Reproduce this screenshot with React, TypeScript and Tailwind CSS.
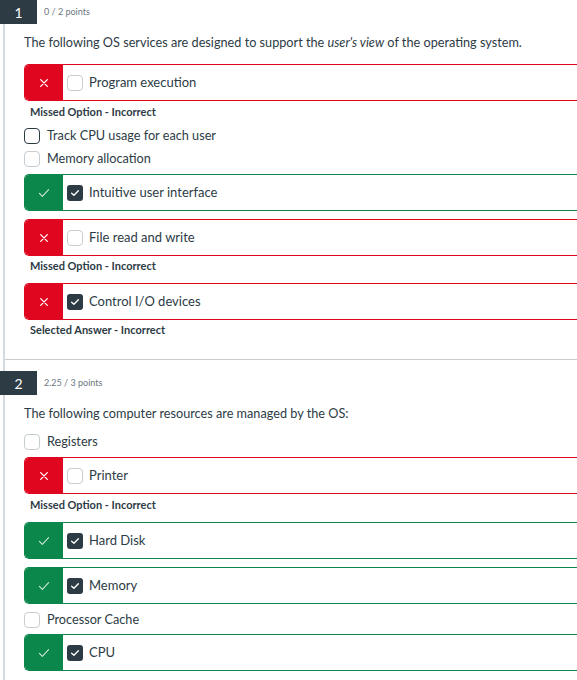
import type { ReactNode } from 'react';

type Status = 'wrong' | 'right';

function Box({ checked, dark }: { checked?: boolean; dark?: boolean }) {
  if (checked) {
    return (
      <span className="flex h-[16px] w-[16px] shrink-0 items-center justify-center rounded-[3px] bg-[#2d3b45]">
        <svg viewBox="0 0 16 16" className="h-[12px] w-[12px]" fill="none" stroke="white" strokeWidth="1.8" strokeLinecap="round" strokeLinejoin="round">
          <path d="M3.5 8.2 6.6 11 12.5 5" />
        </svg>
      </span>
    );
  }
  return (
    <span
      className={
        dark
          ? 'block h-[16px] w-[16px] shrink-0 rounded-[4px] border border-[#2d3b45] bg-white'
          : 'block h-[16px] w-[16px] shrink-0 rounded-[4px] border border-[#c7cdd1] bg-white'
      }
    />
  );
}

/** Graded answer row — coloured mark strip on the left, borders run off to the right. */
function Graded({ status, checked, label, className }: { status: Status; checked?: boolean; label: string; className?: string }) {
  const wrong = status === 'wrong';
  return (
    <div
      className={`${className ?? ''} flex h-[37px] items-stretch overflow-hidden rounded-l-[5px] border-y border-l ${
        wrong ? 'border-[#e0061f]' : 'border-[#0b874b]'
      }`}
    >
      <div
        className={`flex w-[38px] shrink-0 items-center justify-center ${wrong ? 'bg-[#e0061f]' : 'bg-[#0b874b]'}`}
      >
        {wrong ? (
          <svg viewBox="0 0 12 12" className="h-[10px] w-[10px]" stroke="white" strokeWidth="1.5" strokeLinecap="round">
            <path d="M2 2 10 10M10 2 2 10" />
          </svg>
        ) : (
          <svg viewBox="0 0 14 12" className="h-[10px] w-[12px]" fill="none" stroke="#cfe9da" strokeWidth="1.3" strokeLinecap="round" strokeLinejoin="round">
            <path d="M1.5 6.5 5 10 12.5 2" />
          </svg>
        )}
      </div>
      <div className="flex flex-1 items-center gap-[6px] pl-[4px]">
        <Box checked={checked} />
        <span className="text-[13px] text-[#2d3b45]">{label}</span>
      </div>
    </div>
  );
}

function Plain({ label, dark, className }: { label: string; dark?: boolean; className?: string }) {
  return (
    <div className={`${className ?? ''} flex h-[23px] items-center gap-[7px]`}>
      <Box dark={dark} />
      <span className="text-[12.7px] text-[#2d3b45]">{label}</span>
    </div>
  );
}

function Note({ children, className }: { children: ReactNode; className?: string }) {
  return (
    <div className={`${className ?? ''} pl-[6px] text-[11px] font-bold leading-[16px] text-[#2d3b45]`}>{children}</div>
  );
}

function Header({ n, points }: { n: number; points: string }) {
  return (
    <div className="-ml-[5px] flex h-[24px] items-center">
      <div className="flex h-[24px] w-[37px] items-center justify-center bg-[#2d3b45] text-[14px] text-white">{n}</div>
      <span className="ml-[7px] text-[9px] text-[#6b7780]">{points}</span>
    </div>
  );
}

export default function App() {
  return (
    <div className="h-[680px] w-[577px] overflow-hidden bg-white font-['Lato','Liberation_Sans',sans-serif]">
      <div className="ml-[3px] min-h-full border-l-2 border-[#d5dade]">
        <section className="border-b border-[#c7cdd1] pb-[21px]">
          <Header n={1} points="0 / 2 points" />
          <div className="pl-[19px]">
            <p className="mt-[9px] text-[12.7px] leading-[18px] text-[#2d3b45]">
              The following OS services are designed to support the <em>user's view</em> of the operating system.
            </p>
            <Graded className="mt-[13px]" status="wrong" label="Program execution" />
            <Note className="mt-[3px]">Missed Option - Incorrect</Note>
            <Plain className="mt-[4px]" dark label="Track CPU usage for each user" />
            <Plain label="Memory allocation" />
            <Graded className="mt-[4px]" status="right" checked label="Intuitive user interface" />
            <Graded className="mt-[8px]" status="wrong" label="File read and write" />
            <Note className="mt-[2px]">Missed Option - Incorrect</Note>
            <Graded className="mt-[9px]" status="wrong" checked label="Control I/O devices" />
            <Note className="mt-[2px]">Selected Answer - Incorrect</Note>
          </div>
        </section>
        <section className="pt-[11px]">
          <Header n={2} points="2.25 / 3 points" />
          <div className="pl-[19px]">
            <p className="mt-[9px] text-[12.7px] leading-[18px] text-[#2d3b45]">
              The following computer resources are managed by the OS:
            </p>
            <Plain className="mt-[8px]" label="Registers" />
            <Graded className="mt-[4px]" status="wrong" label="Printer" />
            <Note className="mt-[3px]">Missed Option - Incorrect</Note>
            <Graded className="mt-[9px]" status="right" checked label="Hard Disk" />
            <Graded className="mt-[8px]" status="right" checked label="Memory" />
            <Plain className="mt-[4px]" label="Processor Cache" />
            <Graded className="mt-[3px]" status="right" checked label="CPU" />
          </div>
        </section>
      </div>
    </div>
  );
}
